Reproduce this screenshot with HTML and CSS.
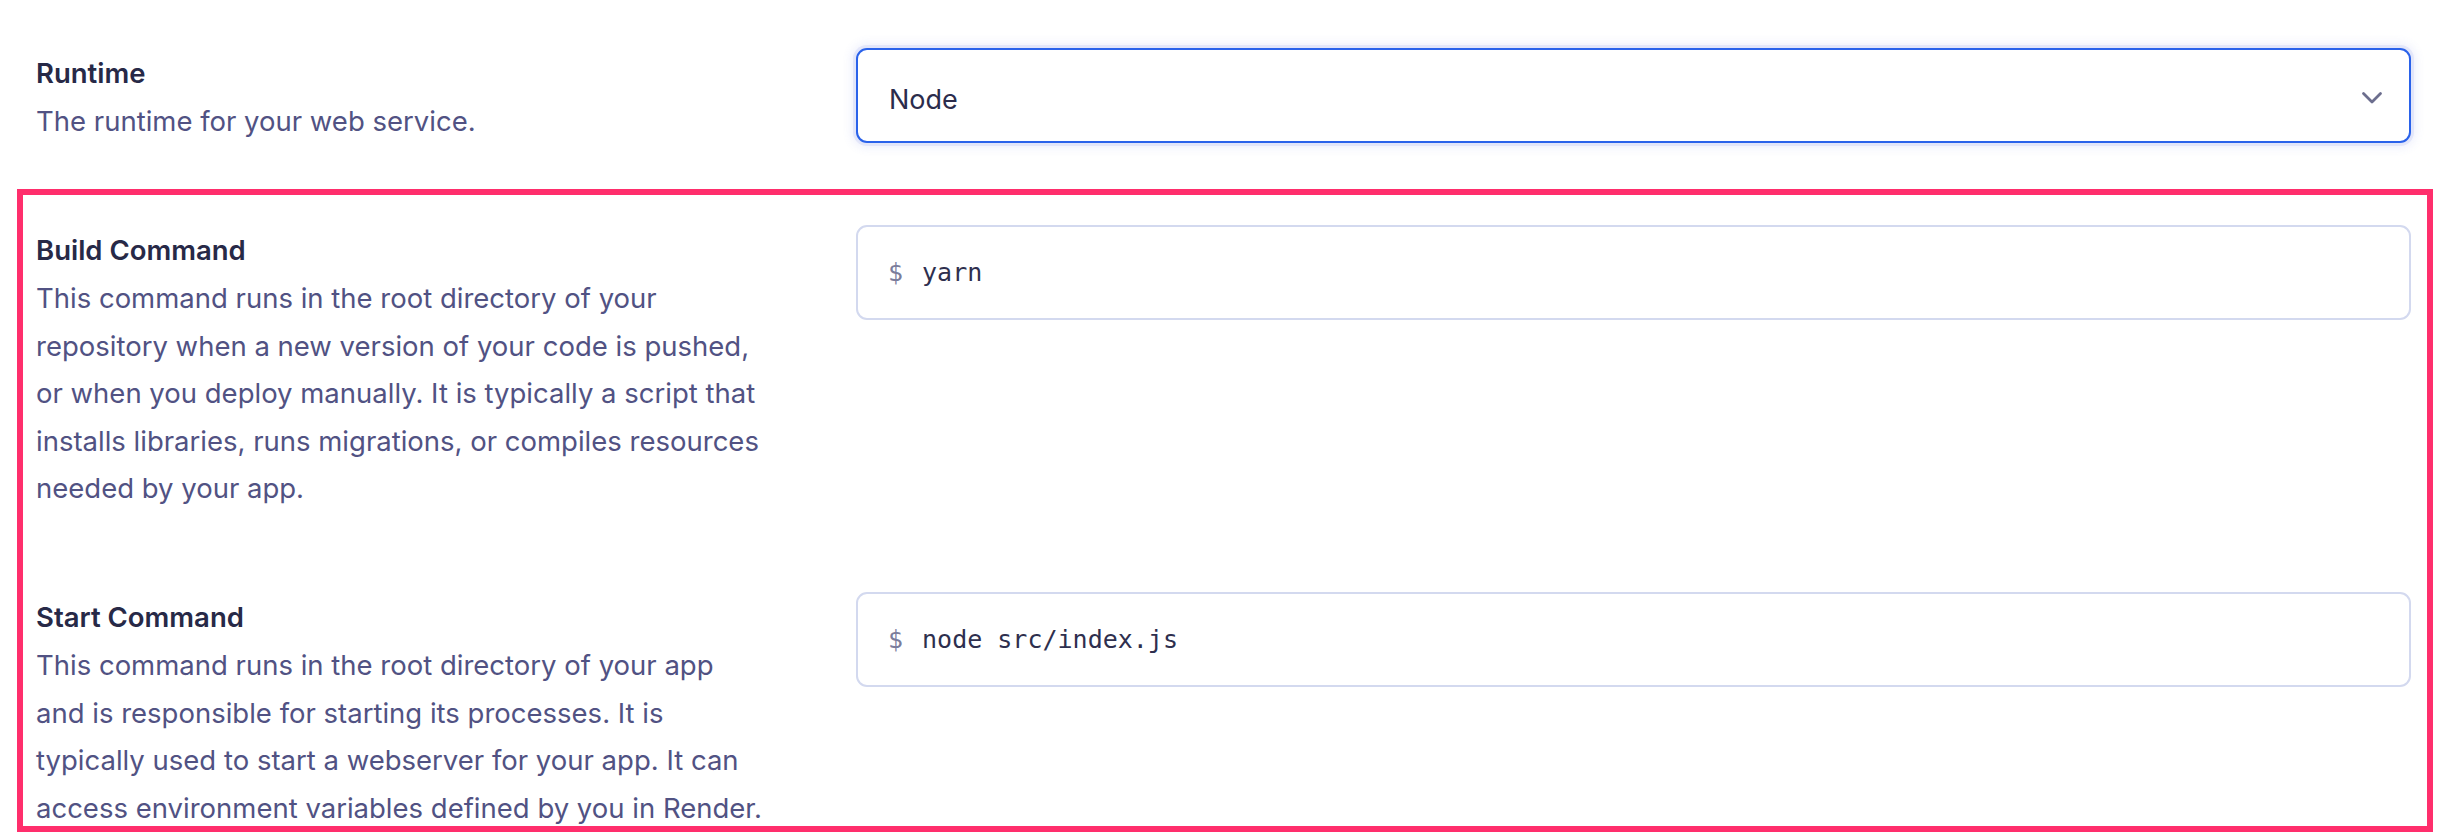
FILE: index.html
```html
<!DOCTYPE html>
<html lang="en">
<head>
<meta charset="utf-8">
<title>Service settings</title>
<link rel="stylesheet" href="styles.css">
</head>
<body>
<main class="settings">
  <section class="field-row">
    <div class="field-label">
      <h3 class="field-title">Runtime</h3>
      <p class="field-desc">The runtime for your web service.</p>
    </div>
    <div class="field-control">
      <div class="select select-focused">
        <span class="select-value">Node</span>
        <svg class="chevron" width="22" height="14" viewBox="0 0 22 14" aria-hidden="true">
          <path d="M2.5 2.5 L11 11 L19.5 2.5" fill="none" stroke="currentColor" stroke-width="2.8" stroke-linecap="round" stroke-linejoin="round"/>
        </svg>
      </div>
    </div>
  </section>

  <section class="field-row">
    <div class="field-label">
      <h3 class="field-title">Build Command</h3>
      <p class="field-desc">This command runs in the root directory of your repository when a new version of your code is pushed, or when you deploy manually. It is typically a script that installs libraries, runs migrations, or compiles resources needed by your app.</p>
    </div>
    <div class="field-control">
      <div class="cmd-input"><span class="prompt">$</span><span class="cmd">yarn</span></div>
    </div>
  </section>

  <section class="field-row">
    <div class="field-label">
      <h3 class="field-title">Start Command</h3>
      <p class="field-desc">This command runs in the root directory of your app and is responsible for starting its processes. It is typically used to start a webserver for your app. It can access environment variables defined by you in Render.</p>
    </div>
    <div class="field-control">
      <div class="cmd-input"><span class="prompt">$</span><span class="cmd">node src/index.js</span></div>
    </div>
  </section>

  <div class="highlight" aria-hidden="true"></div>
</main>
</body>
</html>
```

FILE: styles.css
```css
* { box-sizing: border-box; }

html, body {
  margin: 0;
  padding: 0;
  background: #ffffff;
}

body {
  font-family: Inter, "Noto Sans", sans-serif;
  color: #272947;
  overflow: hidden;
  height: 834px;
}

.settings {
  position: relative;
  display: flex;
  flex-direction: column;
  gap: 79.5px;
  padding: 48px 35px 0 36px;
}

.field-row {
  display: grid;
  grid-template-columns: 770px 1fr;
  column-gap: 50px;
  align-items: start;
}

.field-label {
  padding-top: 10px;
}

.field-title {
  margin: 0;
  font-size: 27.5px;
  line-height: 30px;
  font-weight: 600;
  color: #272947;
}

.field-desc {
  margin: 10px 0 0;
  max-width: 733px;
  font-size: 27.5px;
  line-height: 47.5px;
  font-weight: 400;
  color: #515283;
}

.select,
.cmd-input {
  height: 95px;
  border-radius: 11px;
  display: flex;
  align-items: center;
  background: #ffffff;
}

.select {
  justify-content: space-between;
  padding: 0 26px 0 31px;
  border: 2px solid #2a62ea;
  box-shadow: 0 0 0 3px rgba(90, 110, 230, 0.10), 0 0 10px 5px rgba(90, 110, 230, 0.10);
}

.select-value {
  margin-top: 8px;
  font-size: 27px;
  color: #2b2c4c;
}

.chevron {
  margin-top: 4px;
  color: #6c6e8e;
}

.cmd-input {
  padding: 0 30px;
  border: 2px solid #d3d9ef;
  font-family: "DejaVu Sans Mono", "Liberation Mono", monospace;
  font-size: 25px;
}

.prompt {
  color: #7b7d9c;
  margin-right: 19px;
}

.cmd {
  color: #2e2f4e;
}

.highlight {
  position: absolute;
  left: 17px;
  top: 189px;
  width: 2416px;
  height: 643px;
  border: 6px solid #ff2e6c;
  pointer-events: none;
}
```
